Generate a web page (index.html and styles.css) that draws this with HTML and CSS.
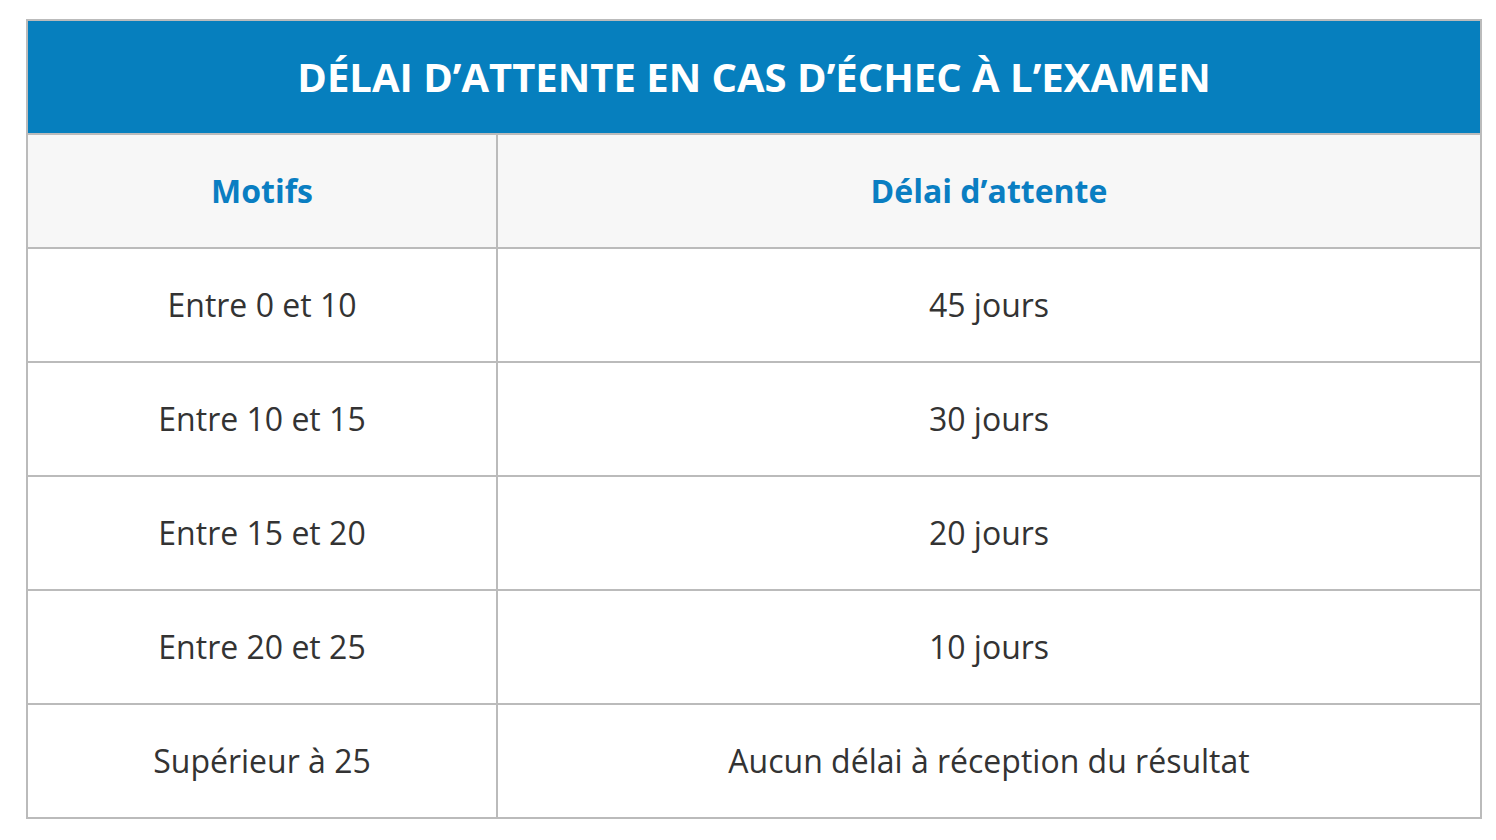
FILE: index.html
```html
<!DOCTYPE html>
<html lang="fr">
<head>
<meta charset="utf-8">
<title>Délai d’attente</title>
<link rel="stylesheet" href="styles.css">
</head>
<body>
<div class="delay-table">
  <div class="title">DÉLAI D’ATTENTE EN CAS D’ÉCHEC À L’EXAMEN</div>
  <div class="row head">
    <div class="cell">Motifs</div>
    <div class="cell">Délai d’attente</div>
  </div>
  <div class="row">
    <div class="cell">Entre 0 et 10</div>
    <div class="cell">45 jours</div>
  </div>
  <div class="row">
    <div class="cell">Entre 10 et 15</div>
    <div class="cell">30 jours</div>
  </div>
  <div class="row">
    <div class="cell">Entre 15 et 20</div>
    <div class="cell">20 jours</div>
  </div>
  <div class="row">
    <div class="cell">Entre 20 et 25</div>
    <div class="cell">10 jours</div>
  </div>
  <div class="row">
    <div class="cell">Supérieur à 25</div>
    <div class="cell">Aucun délai à réception du résultat</div>
  </div>
</div>
</body>
</html>
```

FILE: styles.css
```css
html, body {
  margin: 0;
  padding: 0;
  background: #ffffff;
}
body {
  font-family: "Open Sans", "Noto Sans", sans-serif;
  color: #333333;
}
.delay-table {
  box-sizing: border-box;
  width: 1456px;
  margin: 19px 0 0 26px;
  border: 2px solid #bbbbbb;
}
.title {
  height: 112px;
  display: flex;
  align-items: center;
  justify-content: center;
  background: #067fbe;
  color: #ffffff;
  font-weight: 700;
  font-size: 40px;
  padding-bottom: 2px;
  box-sizing: border-box;
}
.row {
  display: grid;
  grid-template-columns: 468px 982px;
  column-gap: 2px;
  background: #bbbbbb;
  border-top: 2px solid #bbbbbb;
}
.cell {
  height: 112px;
  box-sizing: border-box;
  padding-bottom: 2px;
  display: flex;
  align-items: center;
  justify-content: center;
  background: #ffffff;
  font-size: 32px;
}
.head .cell {
  background: #f7f7f7;
  color: #0a7ec2;
  font-weight: 700;
}
```
